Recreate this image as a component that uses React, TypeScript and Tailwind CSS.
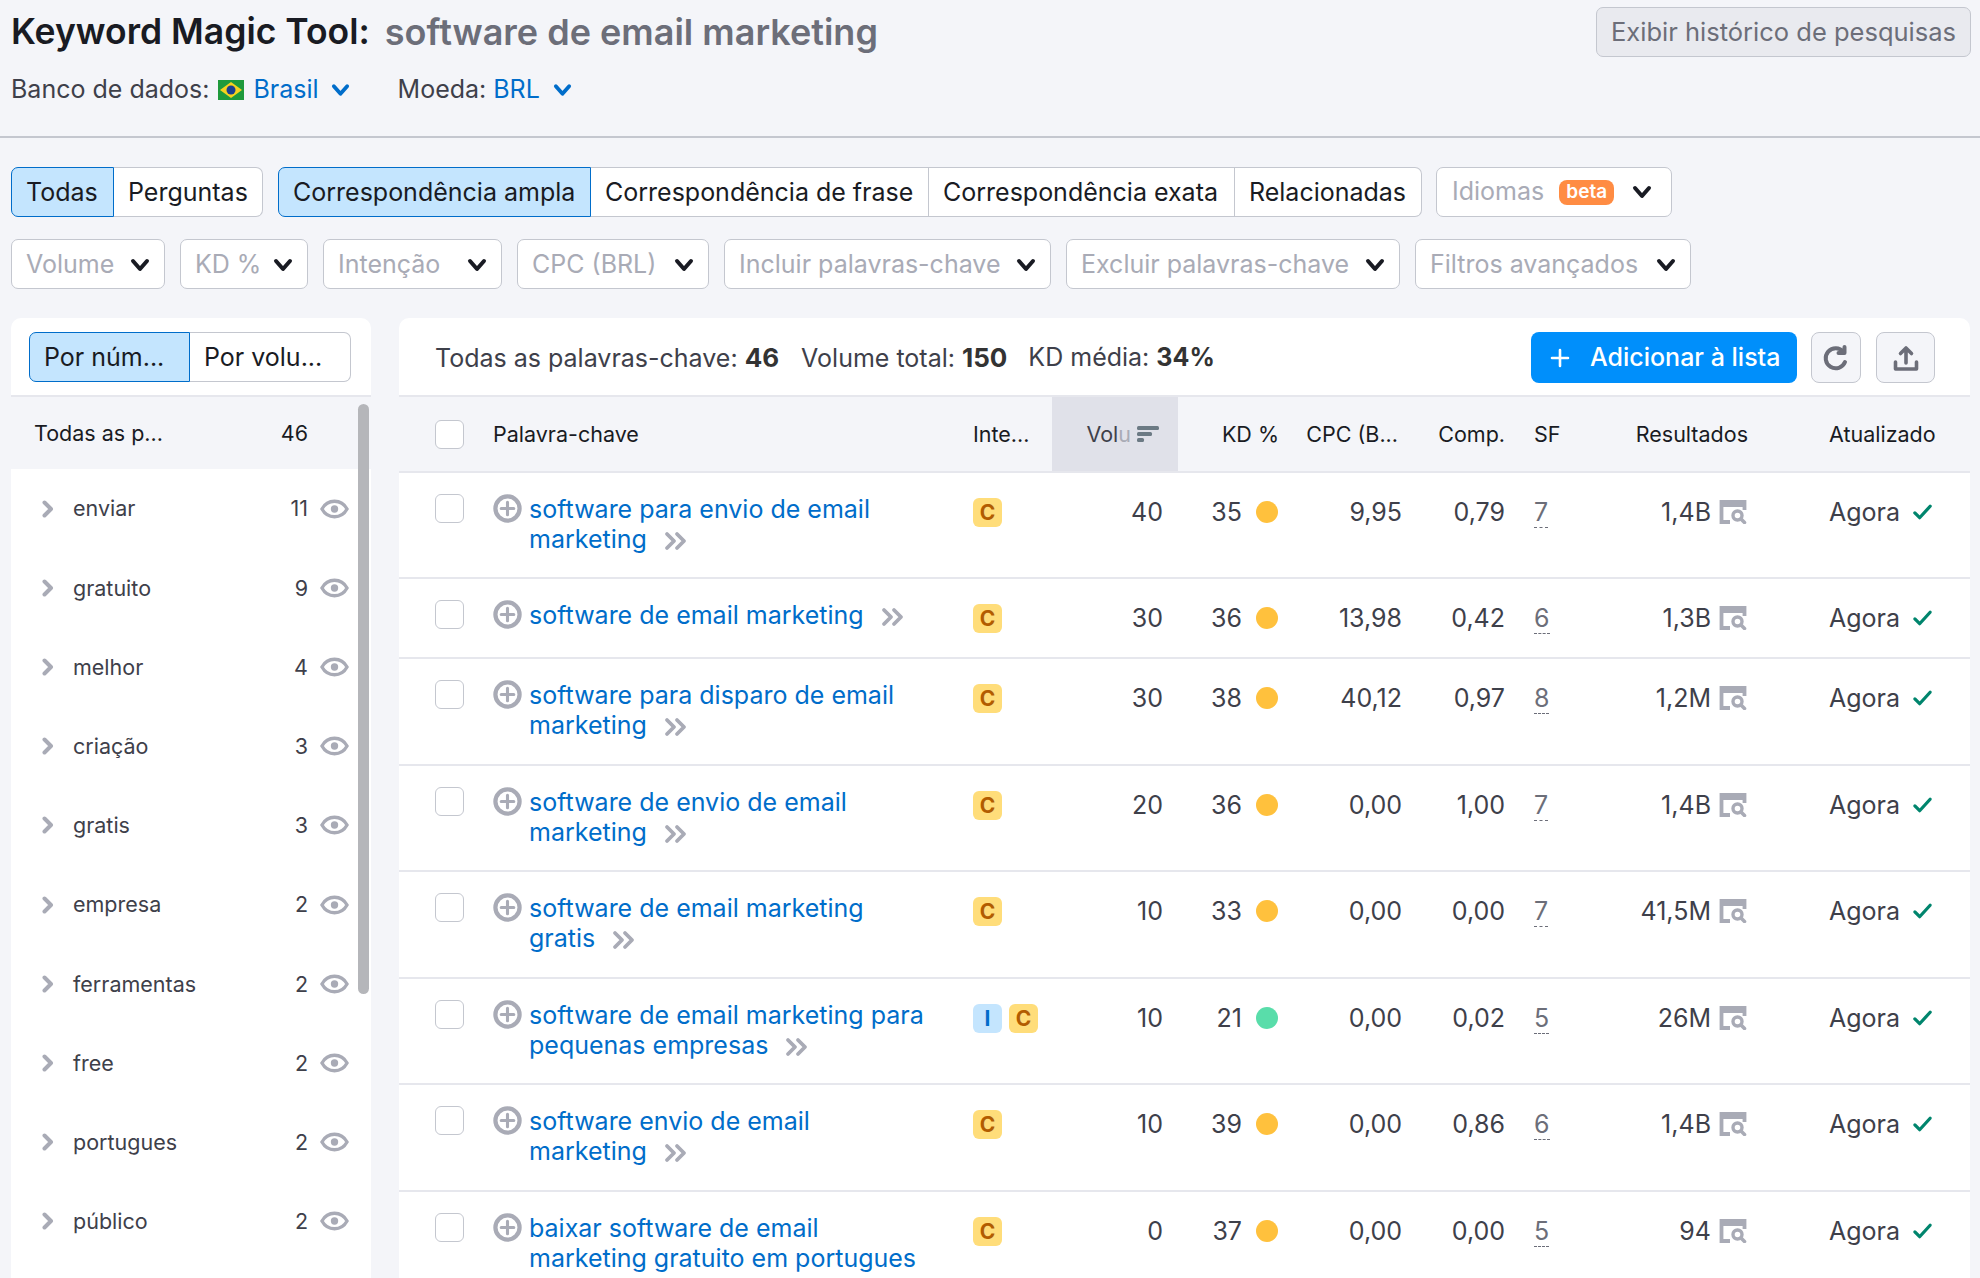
import type { ReactNode } from "react";

const rowGrid =
  "grid grid-cols-[36px_58px_480px_79px_126px_112px_125px_104px_101px_140px_209px] items-start";

const keywords = [
  { lines: ["software para envio de email", "marketing"], intents: ["C"], volume: "40", kd: "35", dot: "bg-[#ffc13d]", cpc: "9,95", comp: "0,79", sf: "7", results: "1,4B", h: "h-[106px]" },
  { lines: ["software de email marketing"], intents: ["C"], volume: "30", kd: "36", dot: "bg-[#ffc13d]", cpc: "13,98", comp: "0,42", sf: "6", results: "1,3B", h: "h-[80px]" },
  { lines: ["software para disparo de email", "marketing"], intents: ["C"], volume: "30", kd: "38", dot: "bg-[#ffc13d]", cpc: "40,12", comp: "0,97", sf: "8", results: "1,2M", h: "h-[107px]" },
  { lines: ["software de envio de email", "marketing"], intents: ["C"], volume: "20", kd: "36", dot: "bg-[#ffc13d]", cpc: "0,00", comp: "1,00", sf: "7", results: "1,4B", h: "h-[106px]" },
  { lines: ["software de email marketing", "gratis"], intents: ["C"], volume: "10", kd: "33", dot: "bg-[#ffc13d]", cpc: "0,00", comp: "0,00", sf: "7", results: "41,5M", h: "h-[107px]" },
  { lines: ["software de email marketing para", "pequenas empresas"], intents: ["I", "C"], volume: "10", kd: "21", dot: "bg-[#59ddaa]", cpc: "0,00", comp: "0,02", sf: "5", results: "26M", h: "h-[106px]" },
  { lines: ["software envio de email", "marketing"], intents: ["C"], volume: "10", kd: "39", dot: "bg-[#ffc13d]", cpc: "0,00", comp: "0,86", sf: "6", results: "1,4B", h: "h-[107px]" },
  { lines: ["baixar software de email", "marketing gratuito em portugues"], intents: ["C"], volume: "0", kd: "37", dot: "bg-[#ffc13d]", cpc: "0,00", comp: "0,00", sf: "5", results: "94", h: "h-[106px]" },
];

const groups = [
  ["enviar", "11"],
  ["gratuito", "9"],
  ["melhor", "4"],
  ["criação", "3"],
  ["gratis", "3"],
  ["empresa", "2"],
  ["ferramentas", "2"],
  ["free", "2"],
  ["portugues", "2"],
  ["público", "2"],
];

function ChevronDown({ className }: { className: string }) {
  return (
    <svg viewBox="0 0 20 14" className={className} fill="none" stroke="currentColor" strokeWidth="4" strokeLinecap="round" strokeLinejoin="round">
      <path d="M3 3l7 8 7-8" />
    </svg>
  );
}

function ChevronRight() {
  return (
    <svg viewBox="0 0 12 18" className="h-[18px] w-[12px] text-[#a9abb6]" fill="none" stroke="currentColor" strokeWidth="4" strokeLinecap="round" strokeLinejoin="round">
      <path d="M2.500 2.500L9 9l-6.500 6.500" />
    </svg>
  );
}

function Eye() {
  return (
    <svg viewBox="0 0 30 22" className="h-[22px] w-[29px] shrink-0 text-[#a9abb6]" fill="none">
      <path d="M2 11C5 5.500 9.500 3 15 3s10 2.500 13 8c-3 5.500-7.500 8-13 8S5 16.500 2 11z" stroke="currentColor" strokeWidth="3.400" />
      <circle cx="15" cy="11" r="3.800" fill="currentColor" />
    </svg>
  );
}

function DoubleChevron() {
  return (
    <svg viewBox="0 0 24 20" className="ml-[17px] inline-block h-[20px] w-[24px] align-[-3px] text-[#a9abb6]" fill="none" stroke="currentColor" strokeWidth="3.800" strokeLinecap="round" strokeLinejoin="round">
      <path d="M3 3l7 7-7 7" />
      <path d="M13 3l7 7-7 7" />
    </svg>
  );
}

function PlusCircle() {
  return (
    <svg viewBox="0 0 30 30" className="h-[29px] w-[29px] text-[#a9abb6]" fill="none" stroke="currentColor" strokeWidth="4.400">
      <circle cx="15" cy="15" r="12.500" />
      <path d="M15 8.500v13M8.500 15h13" strokeWidth="3.200" strokeLinecap="round" />
    </svg>
  );
}

function SerpIcon() {
  return (
    <svg viewBox="0 0 28 24" className="h-[24px] w-[28px] shrink-0 text-[#a9abb6]" fill="none">
      <path d="M11 22H2.500V2h23v8" stroke="currentColor" strokeWidth="3.800" />
      <path d="M1 1h26v6H1z" fill="currentColor" />
      <circle cx="18.500" cy="15.500" r="4.500" stroke="currentColor" strokeWidth="3.400" />
      <path d="M22 19l3.500 3.500" stroke="currentColor" strokeWidth="3.600" strokeLinecap="round" />
    </svg>
  );
}

function Check() {
  return (
    <svg viewBox="0 0 22 18" className="h-[18px] w-[21px] text-[#00856d]" fill="none" stroke="currentColor" strokeWidth="3.400" strokeLinecap="round" strokeLinejoin="round">
      <path d="M3 10l5 5L19 3" />
    </svg>
  );
}

function Segment({ children, active, className = "" }: { children: ReactNode; active?: boolean; className?: string }) {
  return (
    <div
      className={`flex h-[50px] items-center whitespace-nowrap border pl-[14px] pt-[1px] ${
        active ? "border-[#006dca] bg-[#c4e5fe]" : "border-[#c4c7cf] bg-white"
      } ${className}`}
    >
      {children}
    </div>
  );
}

function FilterSelect({ label, width }: { label: string; width: string }) {
  return (
    <div className={`flex h-[50px] items-center justify-between rounded-[7px] border border-[#c4c7cf] bg-white pl-[14px] pr-[14px] pt-[1px] text-[#a9abb6] ${width}`}>
      <span>{label}</span>
      <ChevronDown className="h-[14px] w-[20px] text-[#191b23]" />
    </div>
  );
}

function IntentBadge({ letter }: { letter: string }) {
  const tone =
    letter === "I" ? "bg-[#c4e5fe] text-[#006dca]" : "bg-[#ffdd7a] text-[#b25c00]";
  return (
    <span className={`flex h-[29px] w-[29px] items-center justify-center rounded-[6px] text-[21px] font-bold ${tone}`}>
      {letter}
    </span>
  );
}

export default function App() {
  return (
    <div className="h-[1278px] overflow-hidden bg-[#f4f5f9] text-[25px] text-[#191b23] [font-family:Inter,sans-serif]">
      <header className="flex h-[138px] items-start justify-between border-b-2 border-[#c4c7cf] pl-[11px] pr-[9px]">
        <div>
          <h1 className="mt-[9px] flex h-[46px] items-center gap-[15px] whitespace-nowrap text-[36px] font-semibold">
            <span className="text-[35.500px]">Keyword Magic Tool:</span>
            <span className="text-[#6c6e79]">software de email marketing</span>
          </h1>
          <div className="mt-[16px] flex items-center text-[#3e404a]">
            <span>Banco de dados:</span>
            <svg viewBox="0 0 26 20" className="ml-[9px] h-[20px] w-[26px]">
              <rect width="26" height="20" fill="#1f9a3c" />
              <path d="M13 2l11 8-11 8-11-8z" fill="#f7d21e" />
              <circle cx="13" cy="10" r="4.500" fill="#1d3f8f" />
            </svg>
            <span className="ml-[9px] text-[#006dca]">Brasil</span>
            <ChevronDown className="ml-[12px] h-[14px] w-[19px] text-[#006dca]" />
            <span className="ml-[48px]">Moeda:</span>
            <span className="ml-[7px] text-[#006dca]">BRL</span>
            <ChevronDown className="ml-[13px] h-[14px] w-[19px] text-[#006dca]" />
          </div>
        </div>
        <button type="button" className="mt-[7px] flex h-[50px] w-[375px] items-center justify-center whitespace-nowrap rounded-[7px] border border-[#c4c7cf] bg-[#e9eaef] text-[25.500px] text-[#6c6e79]">
          Exibir histórico de pesquisas
        </button>
      </header>

      <div className="mt-[29px] flex gap-[15px] pl-[11px]">
        <div className="flex">
          <Segment active className="w-[103px] rounded-l-[7px]">Todas</Segment>
          <Segment className="w-[149px] rounded-r-[7px] border-l-0">Perguntas</Segment>
        </div>
        <div className="flex">
          <Segment active className="w-[313px] rounded-l-[7px]">Correspondência ampla</Segment>
          <Segment className="w-[338px] border-l-0">Correspondência de frase</Segment>
          <Segment className="w-[306px] border-l-0">Correspondência exata</Segment>
          <Segment className="w-[187px] rounded-r-[7px] border-l-0">Relacionadas</Segment>
        </div>
        <div className="-ml-[1px] flex h-[50px] w-[236px] items-center rounded-[7px] border border-[#c4c7cf] bg-white pl-[15px] text-[#a9abb6]">
          <span>Idiomas</span>
          <span className="ml-[15px] flex h-[25px] w-[55px] items-center justify-center rounded-[8px] bg-[#ff8c43] text-[19px] font-semibold text-white">beta</span>
          <ChevronDown className="ml-[18px] h-[14px] w-[20px] text-[#191b23]" />
        </div>
      </div>

      <div className="mt-[22px] flex gap-[15px] pl-[11px]">
        <FilterSelect label="Volume" width="w-[154px]" />
        <FilterSelect label="KD %" width="w-[128px]" />
        <FilterSelect label="Intenção" width="w-[179px]" />
        <FilterSelect label="CPC (BRL)" width="w-[192px]" />
        <FilterSelect label="Incluir palavras-chave" width="w-[327px]" />
        <FilterSelect label="Excluir palavras-chave" width="w-[334px]" />
        <FilterSelect label="Filtros avançados" width="w-[276px]" />
      </div>

      <div className="mt-[29px] flex items-start gap-[28px] pl-[11px] pr-[9px]">
        <aside className="relative h-[960px] w-[360px] shrink-0 overflow-hidden rounded-t-[10px] bg-white">
          <div className="flex h-[79px] items-start border-b-2 border-[#e6e7ed] pl-[18px] pt-[14px]">
            <Segment active className="w-[161px] rounded-l-[7px]">Por núm...</Segment>
            <Segment className="w-[161px] rounded-r-[7px] border-l-0">Por volu...</Segment>
          </div>
          <div className="flex h-[72px] items-center justify-between bg-[#f4f5f9] pl-[23px] pr-[63px] text-[21.500px]">
            <span>Todas as p...</span>
            <span>46</span>
          </div>
          {groups.map(([name, count]) => (
            <div key={name} className="flex h-[79.200px] items-center pl-[31px] pr-[22px] text-[21.500px] text-[#3e404a]">
              <ChevronRight />
              <span className="ml-[19px] flex-1">{name}</span>
              <span className="mr-[12px]">{count}</span>
              <Eye />
            </div>
          ))}
          <div className="absolute left-[347px] top-[86px] h-[590px] w-[11px] rounded-full bg-[#b5b6ba]" />
        </aside>

        <main className="h-[960px] w-[1571px] shrink-0 overflow-hidden rounded-t-[10px] bg-white">
          <div className="flex h-[79px] items-start border-b-2 border-[#e6e7ed] pl-[36px] pr-[35px] pt-[14px]">
            <div className="mt-[1px] flex h-[50px] flex-1 items-center whitespace-nowrap text-[#3e404a]">
              <span>Todas as palavras-chave: <b className="text-[26px] font-bold text-[#333]">46</b></span>
              <span className="ml-[22px]">Volume total: <b className="text-[26px] font-bold text-[#333]">150</b></span>
              <span className="ml-[21px]">KD média: <b className="text-[25px] font-bold text-[#333]">34%</b></span>
            </div>
            <button type="button" className="flex h-[51px] w-[266px] shrink-0 items-center whitespace-nowrap rounded-[8px] bg-[#008ffb] pl-[19px] font-medium text-white">
              <svg viewBox="0 0 20 20" className="h-[20px] w-[20px]" fill="none" stroke="currentColor" strokeWidth="2.600" strokeLinecap="round">
                <path d="M10 2v16M2 10h16" />
              </svg>
              <span className="ml-[20px]">Adicionar à lista</span>
            </button>
            <button type="button" className="ml-[14px] flex h-[51px] w-[50px] shrink-0 items-center justify-center rounded-[8px] border border-[#c4c7cf] bg-[#f4f5f9] text-[#6c6e79]">
              <svg viewBox="0 0 28 28" className="h-[28px] w-[28px]" fill="none" stroke="currentColor" strokeWidth="4" strokeLinecap="round" strokeLinejoin="round">
                <path d="M23 18a10 10 0 1 1-1.500-10" />
                <path d="M22.500 3v6h-6" />
              </svg>
            </button>
            <button type="button" className="ml-[15px] flex h-[51px] w-[59px] shrink-0 items-center justify-center rounded-[8px] border border-[#c4c7cf] bg-[#f4f5f9] text-[#6c6e79]">
              <svg viewBox="0 0 28 28" className="h-[28px] w-[28px]" fill="none" stroke="currentColor" strokeWidth="3.600" strokeLinecap="round" strokeLinejoin="round">
                <path d="M14 19V4M8.500 9.500L14 4l5.500 5.500" />
                <path d="M3.500 18v7h21v-7" />
              </svg>
            </button>
          </div>

          <div className={`${rowGrid} h-[76px] !items-center border-b-2 border-[#e6e7ed] bg-[#f4f5f9] text-[21.500px]`}>
            <span />
            <span className="h-[29px] w-[29px] rounded-[6px] border border-[#c4c7cf] bg-white" />
            <span>Palavra-chave</span>
            <span>Inte...</span>
            <div className="flex h-full items-center justify-end gap-[6px] bg-[#e0e1e9] pr-[19px]">
              <span className="text-[#3e404a]">Vol<span className="text-[#a9abb6]">u</span></span>
              <svg viewBox="0 0 22 16" className="h-[16px] w-[22px] text-[#6c7a84]" fill="currentColor">
                <rect width="22" height="4" rx="1.500" />
                <rect y="6" width="15" height="4" rx="1.500" />
                <rect y="12" width="7" height="4" rx="1.500" />
              </svg>
            </div>
            <span className="pr-[11px] text-right">KD %</span>
            <span className="pr-[17px] text-right">CPC (B...</span>
            <span className="pr-[14px] text-right">Comp.</span>
            <span className="pl-[15px]">SF</span>
            <span className="pr-[12px] text-right">Resultados</span>
            <span className="pl-[69px]">Atualizado</span>
          </div>

          {keywords.map((row) => (
            <div key={row.lines[0]} className={`${rowGrid} ${row.h} border-b-2 border-[#e6e7ed] pt-[21px] text-[#3e404a]`}>
              <span />
              <span className="h-[29px] w-[29px] rounded-[6px] border border-[#c4c7cf] bg-white" />
              <div className="flex gap-[7px]">
                <div className="shrink-0"><PlusCircle /></div>
                <div className="leading-[30px] text-[#006dca]">
                  {row.lines.map((line, i) => (
                    <div key={line} className="whitespace-nowrap">
                      {line}
                      {i === row.lines.length - 1 && row.results !== "94" && <DoubleChevron />}
                    </div>
                  ))}
                </div>
              </div>
              <div className="flex gap-[7px] pt-[4px]">
                {row.intents.map((letter) => (
                  <IntentBadge key={letter} letter={letter} />
                ))}
              </div>
              <span className="pr-[15px] pt-[3px] text-right leading-[30px]">{row.volume}</span>
              <div className="flex items-center justify-end gap-[14px] pr-[12px] pt-[3px] leading-[30px]">
                <span>{row.kd}</span>
                <span className={`h-[22px] w-[22px] rounded-full ${row.dot}`} />
              </div>
              <span className="pr-[13px] pt-[3px] text-right leading-[30px]">{row.cpc}</span>
              <span className="pr-[14px] pt-[3px] text-right leading-[30px]">{row.comp}</span>
              <div className="pl-[15px] pt-[3px] leading-[30px]">
                <span className="inline-block border-b border-dashed border-[#6c6e79] leading-[29px] text-[#6c6e79]">{row.sf}</span>
              </div>
              <div className="flex items-center justify-end gap-[8px] pr-[13px] pt-[3px] leading-[30px]">
                <span>{row.results}</span>
                <SerpIcon />
              </div>
              <div className="flex items-center gap-[12px] pl-[69px] pt-[3px] leading-[30px]">
                <span>Agora</span>
                <Check />
              </div>
            </div>
          ))}
        </main>
      </div>
    </div>
  );
}
